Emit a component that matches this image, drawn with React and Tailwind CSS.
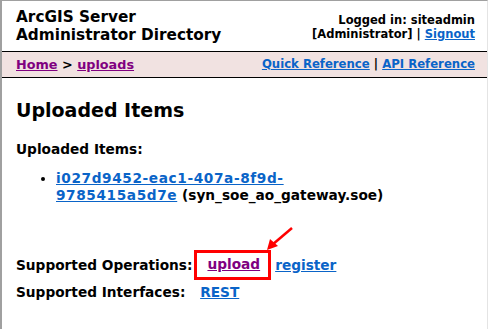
export default function App() {
  const font = { fontFamily: '"DejaVu Sans", Verdana, sans-serif' };
  return (
    <div
      className="w-[488px] h-[329px] bg-white border-t border-l-2 border-r border-t-[#a0a0a0] border-l-[#a0a0a0] border-r-[#e4e4e4] text-black font-bold overflow-hidden"
      style={font}
    >
      <div className="flex justify-between h-[50px] pl-[14px] pr-[12px]">
        <div className="pt-[7px] text-[15.3px] leading-[18px]">
          ArcGIS Server
          <br />
          Administrator Directory
        </div>
        <div className="pt-[12px] text-[11.5px] leading-[14px] text-right">
          Logged in: siteadmin
          <br />
          [Administrator] |{' '}
          <a className="text-[#0a64c8] underline">Signout</a>
        </div>
      </div>
      <div className="flex justify-between items-center h-[27px] bg-[#f1e2e1] border-y border-black pl-[14px] pr-[12px]">
        <div className="text-[12.8px]">
          <a className="text-[#800080] underline">Home</a> &gt;{' '}
          <a className="text-[#800080] underline">uploads</a>
        </div>
        <div className="text-[11.7px]">
          <a className="text-[#0a64c8] underline">Quick Reference</a> |{' '}
          <a className="text-[#0a64c8] underline">API Reference</a>
        </div>
      </div>

      <div className="px-[14px]">
        <h2 className="text-[19px] mt-[18px] mb-[14px]">Uploaded Items</h2>
        <div className="text-[13.7px]">Uploaded Items:</div>
        <ul className="list-disc pl-[40px] mt-[11px] text-[13.7px] leading-[17px]">
          <li>
            <a className="text-[#0a64c8] underline tracking-[0.6px]">
              i027d9452-eac1-407a-8f9d-
              <br />
              9785415a5d7e
            </a>{' '}
            (syn_soe_ao_gateway.soe)
          </li>
        </ul>

        <div className="mt-[46px] text-[13.7px] flex items-center">
          <span>Supported Operations:</span>
          <span className="relative ml-[2px] pl-[10px] pr-[8px] pt-[1px] pb-[2px] border-[3px] border-[#ff0000]">
            <a className="text-[#800080] underline">upload</a>
            <svg
              className="absolute left-[68px] top-[-27px]"
              width="30"
              height="28"
              viewBox="0 0 30 28"
            >
              <line x1="27" y1="2" x2="7" y2="19" stroke="#ff0000" strokeWidth="2.5" />
              <polygon points="2,24 5,13 13,20" fill="#ff0000" />
            </svg>
          </span>
          <a className="ml-[4px] text-[#0a64c8] underline">register</a>
        </div>
        <div className="mt-[2px] text-[13.7px]">
          Supported Interfaces:{' '}
          <a className="ml-[10px] text-[#0a64c8] underline">REST</a>
        </div>
      </div>
    </div>
  );
}
